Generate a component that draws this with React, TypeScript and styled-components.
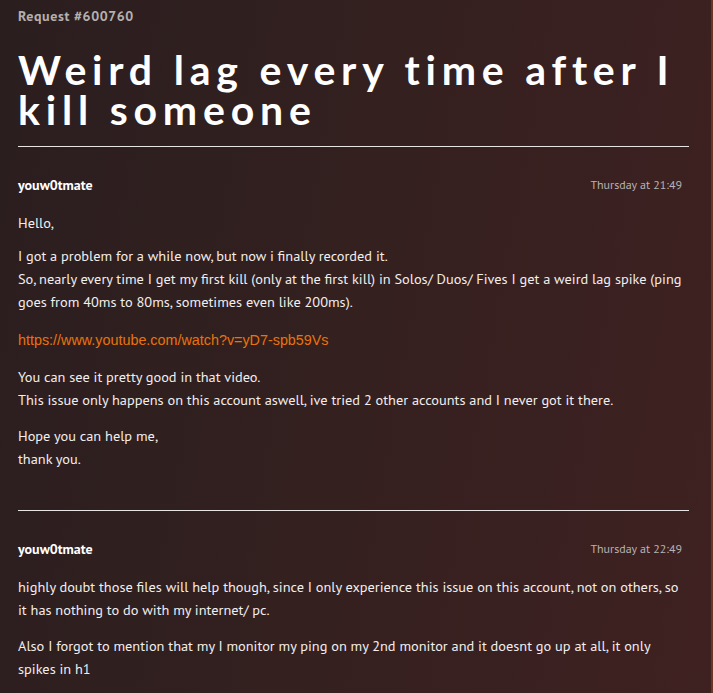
import React from 'react';
import styled, { createGlobalStyle } from 'styled-components';

const GlobalStyle = createGlobalStyle`
  html, body {
    margin: 0;
    padding: 0;
    background: #2d1f20;
  }
`;

const Page = styled.div`
  width: 713px;
  min-height: 693px;
  box-sizing: border-box;
  padding: 8px 22px 20px 18px;
  background: linear-gradient(100deg, #2b1e1f 0%, #33201f 45%, #3f2121 100%);
  border-right: 2px solid #6e3326;
  font-family: 'PT Sans', 'Open Sans', sans-serif;
  color: #f2eeee;
  overflow: hidden;
`;

const RequestLabel = styled.div`
  font-size: 14px;
  font-weight: 700;
  letter-spacing: 0.6px;
  color: #b4b0b0;
  line-height: 16px;
`;

const Title = styled.h1`
  margin: 26px 0 0;
  font-family: 'Lato', sans-serif;
  font-weight: 700;
  font-size: 41px;
  line-height: 40px;
  letter-spacing: 5.8px;
  color: #ffffff;
`;

const Divider = styled.hr<{ $top: number }>`
  border: none;
  border-top: 1px solid #e8e4e4;
  margin: ${({ $top }) => $top}px 0 0;
`;

const Post = styled.article`
  display: flex;
  flex-direction: column;
`;

const PostHeader = styled.div`
  display: flex;
  justify-content: space-between;
  align-items: center;
  margin-top: 30px;
  padding-right: 7px;
  line-height: 16px;
`;

const Author = styled.span`
  font-size: 14px;
  font-weight: 700;
  color: #ffffff;
`;

const Time = styled.span`
  font-size: 12px;
  color: #b8b2b2;
`;

const Body = styled.div`
  margin-top: 18px;
  font-size: 14.35px;
  line-height: 23px;
`;

const Para = styled.p<{ $gap?: number }>`
  margin: 0 0 ${({ $gap = 13 }) => $gap}px;
`;

const VideoLink = styled.a`
  font-family: 'Liberation Sans', Arial, sans-serif;
  color: #e8730c;
  text-decoration: none;
`;

export default function App() {
  return (
    <Page>
      <GlobalStyle />
      <RequestLabel>Request #600760</RequestLabel>
      <Title>Weird lag every time after I kill someone</Title>
      <Divider $top={16} />
      <Post>
        <PostHeader>
          <Author>youw0tmate</Author>
          <Time>Thursday at 21:49</Time>
        </PostHeader>
        <Body>
          <Para $gap={10}>Hello,</Para>
          <Para $gap={15}>
            I got a problem for a while now, but now i finally recorded it.
            <br />
            So, nearly every time I get my first kill (only at the first kill) in Solos/ Duos/ Fives I get a weird lag spike (ping goes from 40ms to 80ms, sometimes even like 200ms).
          </Para>
          <Para>
            <VideoLink href="#">https://www.youtube.com/watch?v=yD7-spb59Vs</VideoLink>
          </Para>
          <Para>
            You can see it pretty good in that video.
            <br />
            This issue only happens on this account aswell, ive tried 2 other accounts and I never got it there.
          </Para>
          <Para>
            Hope you can help me,
            <br />
            thank you.
          </Para>
        </Body>
      </Post>
      <Divider $top={27} />
      <Post>
        <PostHeader>
          <Author>youw0tmate</Author>
          <Time>Thursday at 22:49</Time>
        </PostHeader>
        <Body>
          <Para>
            highly doubt those files will help though, since I only experience this issue on this account, not on others, so it has nothing to do with my internet/ pc.
          </Para>
          <Para>
            Also I forgot to mention that my I monitor my ping on my 2nd monitor and it doesnt go up at all, it only spikes in h1
          </Para>
        </Body>
      </Post>
    </Page>
  );
}
